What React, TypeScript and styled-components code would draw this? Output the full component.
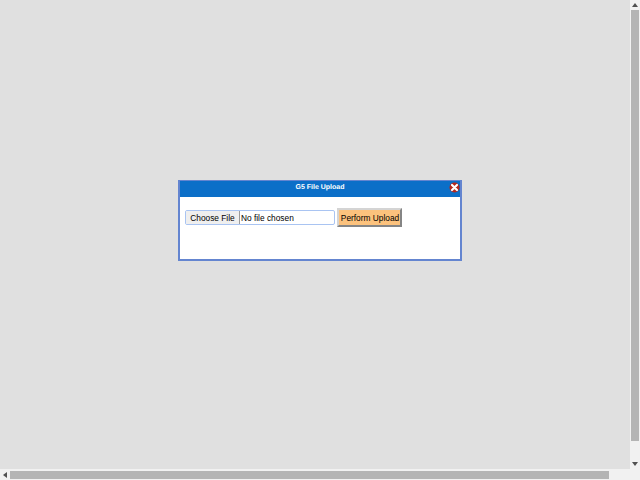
import React from "react";
import styled, { createGlobalStyle } from "styled-components";

const GlobalStyle = createGlobalStyle`
  html, body {
    margin: 0;
    padding: 0;
    overflow: hidden;
  }
  body {
    font-family: "Liberation Sans", Arial, sans-serif;
    text-rendering: geometricPrecision;
  }
`;

const Screen = styled.div`
  display: grid;
  grid-template-columns: 630px 10px;
  grid-template-rows: 469px 11px;
  width: 640px;
  height: 480px;
`;

const Page = styled.main`
  background: #e0e0e0;
  padding: 180px 0 0 178px;
  box-sizing: border-box;
  overflow: hidden;
`;

const Track = styled.div<{ $vertical?: boolean }>`
  display: flex;
  flex-direction: ${(p) => (p.$vertical ? "column" : "row")};
  align-items: center;
  justify-content: space-between;
  background: #f1f1f1;
`;

const Corner = styled.div`
  background: #f1f1f1;
`;

const Thumb = styled.div<{ $vertical?: boolean }>`
  background: #b4b4b4;
  flex: none;
  width: ${(p) => (p.$vertical ? "8px" : "599px")};
  height: ${(p) => (p.$vertical ? "431px" : "8px")};
  margin: ${(p) => (p.$vertical ? "0 0 18px" : "1px 21px 0 0")};
`;

const Arrow = styled.svg`
  display: block;
  flex: none;
  width: 10px;
  height: 10px;
  fill: #505050;
`;

const Dialog = styled.section`
  width: 284px;
  height: 81px;
  box-sizing: border-box;
  background: #fff;
  border: 2px solid #6485d0;
  border-top-width: 1px;
`;

const TitleBar = styled.header`
  position: relative;
  display: flex;
  align-items: center;
  justify-content: center;
  height: 16px;
  padding-bottom: 4px;
  box-sizing: border-box;
  background: #0b6fc8;
  color: #fff;
  font-size: 7px;
  font-weight: bold;
`;

const CloseIcon = styled.svg`
  position: absolute;
  right: 0;
  top: 1px;
  width: 11px;
  height: 11px;
`;

const Form = styled.form`
  display: flex;
  align-items: center;
  gap: 2px;
  padding: 11px 0 0 5px;
`;

const FileInput = styled.input`
  width: 150px;
  height: 15px;
  box-sizing: border-box;
  padding: 0;
  background: #fff;
  border: 1px solid #a9c4f2;
  border-radius: 2px;
  color: #000;
  font-family: "Liberation Sans", Arial, sans-serif;
  font-size: 8.33px;
  line-height: 13px;

  &::file-selector-button {
    width: 54px;
    height: 13px;
    margin: 0 1px 0 0;
    padding: 0;
    background: #efefef;
    border: 0;
    border-right: 1px solid #9a9a9a;
    color: #000;
    font-family: inherit;
    font-size: 8.33px;
  }
`;

const UploadButton = styled.button`
  width: 65px;
  height: 19px;
  box-sizing: border-box;
  padding: 0 0 0 1px;
  background: #fcc27d;
  border: 2px solid;
  border-color: #d4d4d4 #858585 #858585 #d4d4d4;
  color: #000;
  font-family: "Liberation Sans", Arial, sans-serif;
  font-size: 8.33px;
`;

export default function App() {
  return (
    <Screen>
      <GlobalStyle />
      <Page>
        <Dialog>
          <TitleBar>
            G5 File Upload
            <CloseIcon viewBox="0 0 11 11">
              <circle cx="5.5" cy="5.5" r="5" fill="#b5281c" />
              <path d="M3 3l5 5M8 3l-5 5" stroke="#fff" strokeWidth="2.2" strokeLinecap="round" />
            </CloseIcon>
          </TitleBar>
          <Form onSubmit={(e) => e.preventDefault()}>
            <FileInput type="file" />
            <UploadButton type="submit">Perform Upload</UploadButton>
          </Form>
        </Dialog>
      </Page>
      <Track $vertical>
        <Arrow viewBox="0 0 10 10">
          <path d="M5 3L8 7H2z" />
        </Arrow>
        <Thumb $vertical />
        <Arrow viewBox="0 0 10 10">
          <path d="M5 7L2 3h6z" />
        </Arrow>
      </Track>
      <Track>
        <Arrow viewBox="0 0 10 10">
          <path d="M3 5l4-3v6z" />
        </Arrow>
        <Thumb />
        <Arrow viewBox="0 0 10 10">
          <path d="M7 5L3 8V2z" />
        </Arrow>
      </Track>
      <Corner />
    </Screen>
  );
}
